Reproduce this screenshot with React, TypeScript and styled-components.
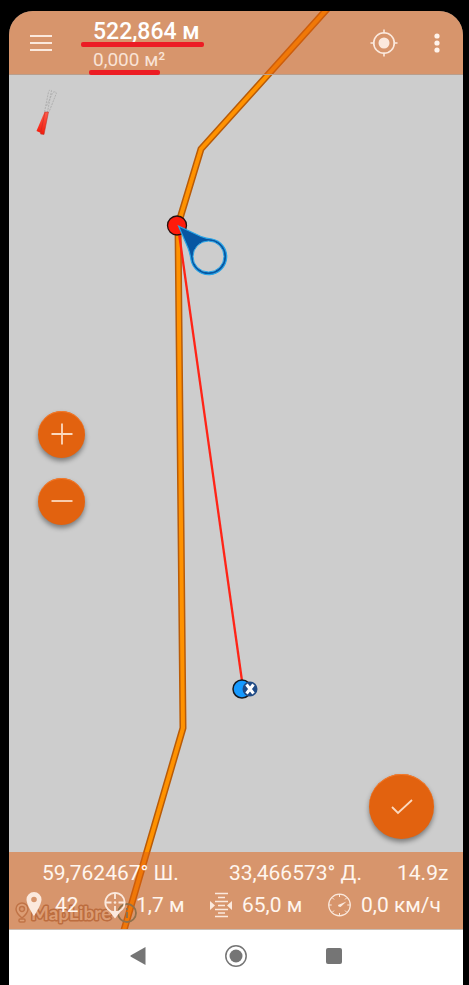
import React from 'react';
import styled, { createGlobalStyle } from 'styled-components';

const bar = 'rgba(226, 97, 16, 0.51)';
const cream = '#fbe9dd';

const GlobalStyle = createGlobalStyle`
  * { box-sizing: border-box; }
  body {
    margin: 0;
    background: #000;
    font-family: Roboto, "Noto Sans", sans-serif;
  }
  button {
    border: 0;
    padding: 0;
    background: none;
    display: flex;
    align-items: center;
    justify-content: center;
    cursor: pointer;
  }
  svg { display: block; }
`;

const Screen = styled.div`
  padding: 11px 6px 0 9px;
  min-height: 100vh;
  display: flex;
`;

const Phone = styled.main`
  position: relative;
  flex: 1;
  display: flex;
  flex-direction: column;
  overflow: hidden;
  background: #cdcdcd;
  border-radius: 24px 24px 0 0;
`;

const MapCanvas = styled.svg`
  position: absolute;
  inset: 0;
  width: 100%;
  height: 100%;
`;

const Header = styled.header`
  position: relative;
  display: flex;
  align-items: center;
  height: 64px;
  padding: 0 10px 0 18px;
  background: ${bar};
  border-bottom: 1px solid #b99e8c;
  color: ${cream};
`;

const HeaderButton = styled.button<{ $width: number }>`
  width: ${p => p.$width}px;
  height: 44px;
  color: ${cream};
`;

const HeaderActions = styled.div`
  display: flex;
  gap: 15px;
`;

const Measurements = styled.div`
  flex: 1;
  display: flex;
  flex-direction: column;
  align-items: flex-start;
  gap: 4px;
  margin-left: 38px;
  padding-top: 7px;
`;

const Measure = styled.span<{ $main?: boolean }>`
  position: relative;
  font-size: ${p => (p.$main ? 23 : 19)}px;
  line-height: 24px;
  font-weight: ${p => (p.$main ? 500 : 400)};
  color: ${p => (p.$main ? '#fff' : '#f9e3d6')};
  white-space: nowrap;

  &::after {
    content: '';
    position: absolute;
    left: ${p => (p.$main ? -12 : -4)}px;
    right: ${p => (p.$main ? -4 : 5)}px;
    bottom: -3px;
    height: 5px;
    border-radius: 2px;
    background: #ec1c24;
  }
`;

const MapArea = styled.section`
  position: relative;
  flex: 1;
  display: flex;
  flex-direction: column;
  justify-content: space-between;
  padding: 14px 29px 13px 24px;
`;

const ZoomControls = styled.div`
  display: flex;
  flex-direction: column;
  gap: 20px;
  padding-left: 5px;
  margin-top: 72px;
`;

const RoundButton = styled.button<{ $size: number }>`
  width: ${p => p.$size}px;
  height: ${p => p.$size}px;
  border-radius: 50%;
  background: #e2620f;
  color: #fbd9bf;
  box-shadow: 0 3px 5px rgba(0, 0, 0, 0.4), inset 0 1px 0 #f47a2c;
`;

const Confirm = styled(RoundButton)`
  align-self: flex-end;
`;

const Footer = styled.footer`
  position: relative;
  display: flex;
  flex-direction: column;
  gap: 7px;
  height: 78px;
  padding: 9px 0 0;
  background: ${bar};
  border-bottom: 1px solid #c9bdb4;
  color: #fff6ef;
  font-size: 21px;
  line-height: 24px;
  white-space: nowrap;
`;

const Coordinates = styled.div`
  display: grid;
  grid-template-columns: 187fr 168fr 66fr;
  padding-left: 33px;
`;

const Stats = styled.div`
  display: grid;
  grid-template-columns: 81fr 106fr 118fr 135fr;
  padding-left: 14px;
`;

const Stat = styled.div`
  display: flex;
  align-items: center;
  gap: 10px;
  height: 26px;
`;

const Attribution = styled.div`
  position: absolute;
  left: 5px;
  bottom: 60px;
  display: flex;
  align-items: center;
  gap: 2px;
`;

const NavBar = styled.nav`
  position: relative;
  display: flex;
  justify-content: center;
  gap: 54px;
  height: 55px;
  padding-bottom: 3px;
  background: #fff;
`;

const NavButton = styled.button`
  width: 44px;
  color: #757575;
`;

const track = '328,8 201,149 178,225 183,728 124,930';

const MapDrawing = () => (
  <MapCanvas viewBox="9 11 454 974" preserveAspectRatio="xMidYMid slice" aria-hidden="true">
    <g fill="none" strokeLinejoin="round">
      <polyline points={track} stroke="#b85b08" strokeWidth="7" />
      <polyline points={track} stroke="#ff9200" strokeWidth="4" />
      <path d="M178 226 243 688" stroke="#ff2417" strokeWidth="2.3" />
    </g>
    <circle cx="177" cy="225.500" r="9.500" fill="#ff1b0c" stroke="#26100e" strokeWidth="1.300" />
    <path d="M178.500 226 201 236.500Q206 238.500 212 239A18 18 0 1 1 191 260Q190 253 188 248Z" fill="#0756a2" stroke="#27a5e8" strokeWidth="1.200" />
    <circle cx="208.500" cy="256.500" r="15.500" fill="#cdcdcd" stroke="#27a5e8" strokeWidth="1" />
    <circle cx="242" cy="689" r="9" fill="#169aff" stroke="#171a20" strokeWidth="1.500" />
    <circle cx="250" cy="689" r="7.500" fill="#204b86" />
    <path d="m246.500 684.500 7 9m0-9-7 9" stroke="#fff" strokeWidth="3" />
    <defs>
      <linearGradient id="needle" x1="0" y1="0" x2="0" y2="1">
        <stop offset="0" stopColor="#ff5a4a" />
        <stop offset="1" stopColor="#f51b0b" />
      </linearGradient>
    </defs>
    <g fill="none" stroke="#b0b0b0" strokeWidth="1" strokeDasharray="2 1">
      <path d="m44.500 112 4-20q1-3 3-1.500l-4 21.500M46.500 106l6-13q2-2.500 4 0L49 112" />
    </g>
    <path d="M44.500 112h3.500l-2 10-5 11-4.500-2Z" fill="url(#needle)" />
    <path d="M45 112h3.500l-4.500 22.500-3.500-.5Z" fill="url(#needle)" stroke="#b53026" strokeWidth=".5" />
  </MapCanvas>
);

const LocationIcon = () => (
  <svg width="28" height="28" viewBox="0 0 28 28" fill="none" stroke="currentColor">
    <circle cx="14" cy="14" r="10.300" strokeWidth="1.600" />
    <circle cx="14" cy="14" r="5.500" fill="currentColor" stroke="none" />
    <path d="M14 .5v4M14 23.500v4M.5 14h4M23.500 14h4" strokeWidth="1.600" />
  </svg>
);

const PinIcon = () => (
  <svg width="22" height="26" viewBox="0 0 22 26">
    <path fill={cream} fillRule="evenodd" d="M11 0a7.500 7.500 0 0 0-7.500 7.500C3.500 13 11 24 11 24s7.500-11 7.500-16.500A7.500 7.500 0 0 0 11 0Zm0 4.700a2.800 2.800 0 1 1 0 5.600 2.800 2.800 0 0 1 0-5.600Z" />
  </svg>
);

const AccuracyIcon = () => (
  <svg width="22" height="28" viewBox="0 0 22 28" fill="none" stroke={cream}>
    <circle cx="11" cy="11.500" r="9.700" strokeWidth="1.800" />
    <path d="M11 2v6M11 15v6M1.500 11.500h6M14.500 11.500h6" strokeWidth="1.800" />
    <circle cx="11" cy="11.500" r="1.300" fill={cream} stroke="none" />
    <path d="M3.500 18q7.500 5 15 0L11 27.500Z" fill={cream} stroke="none" />
  </svg>
);

const AltitudeIcon = () => (
  <svg width="22" height="26" viewBox="0 0 22 26" stroke={cream} strokeWidth="1.300">
    <path d="M5 1.500h13M8 5.500h7M5 9.500h13M8 13.500h7M5 17.500h13M8 21h7M5 24.500h13" />
    <path d="M0 9v9l5-4.500ZM22 9v9l-5-4.500Z" fill={cream} stroke="none" />
  </svg>
);

const SpeedIcon = () => (
  <svg width="23" height="24" viewBox="0 0 23 24" fill="none" stroke={cream}>
    <circle cx="11.500" cy="12" r="10.800" strokeWidth="1.200" />
    <path d="M11.500 1v3M11.500 20v3M.7 12h3M19.300 12h3M4 4.500l2 2M17 17.500l2 2M4 19.500l2-2M17 6.500l2-2" />
    <path d="m18.500 8.500-6 5.500-2-.5-.5-1.500Z" fill={cream} stroke="none" />
  </svg>
);

const MapLibreLogo = () => (
  <svg width="101" height="24" viewBox="0 0 101 24" role="img" aria-label="MapLibre">
    <g fill="#d7dcdd" stroke="#9d8880" strokeWidth="1.500">
      <path fillRule="evenodd" d="M8 2a6 6 0 0 0-6 6c0 4 6 9 6 9s6-5 6-9a6 6 0 0 0-6-6Zm0 3.500a2.500 2.500 0 1 1 0 5 2.500 2.500 0 0 1 0-5Z" />
      <rect x="5" y="18" width="6" height="3" rx="1" />
    </g>
    <text x="17" y="19" fontFamily="Lato, sans-serif" fontWeight="700" fontSize="19" fill="#d7dcdd" stroke="#957a70" strokeWidth="3" strokeLinejoin="round" paintOrder="stroke">MapLibre</text>
  </svg>
);

export default function App() {
  return (
    <>
      <GlobalStyle />
      <Screen>
        <Phone>
          <MapDrawing />
          <Attribution>
            <MapLibreLogo />
            <button aria-label="Информация">
              <svg width="20" height="20" viewBox="0 0 20 20" fill="none" stroke="#3c8088">
                <circle cx="10" cy="10" r="9" strokeWidth="1.800" />
                <path d="M10 9v6M10 5v2" strokeWidth="2" />
              </svg>
            </button>
          </Attribution>
          <Header>
            <HeaderButton $width={28} aria-label="Меню">
              <svg width="22" height="16" viewBox="0 0 22 16" stroke="currentColor" strokeWidth="2">
                <path d="M0 1h22M0 8h22M0 15h22" />
              </svg>
            </HeaderButton>
            <Measurements>
              <Measure $main>522,864 м</Measure>
              <Measure>0,000 м²</Measure>
            </Measurements>
            <HeaderActions>
              <HeaderButton $width={44} aria-label="Моё местоположение"><LocationIcon /></HeaderButton>
              <HeaderButton $width={32} aria-label="Ещё">
                <svg width="6" height="20" viewBox="0 0 6 20" fill="#fff3eb">
                  <circle cx="3" cy="3" r="2.600" />
                  <circle cx="3" cy="10" r="2.600" />
                  <circle cx="3" cy="17" r="2.600" />
                </svg>
              </HeaderButton>
            </HeaderActions>
          </Header>
          <MapArea>
            <span />
            <ZoomControls>
              <RoundButton $size={47} aria-label="Приблизить">
                <svg width="22" height="22" viewBox="0 0 22 22" stroke="currentColor" strokeWidth="1.800"><path d="M.5 11h21M11 .5v21" /></svg>
              </RoundButton>
              <RoundButton $size={47} aria-label="Отдалить">
                <svg width="22" height="22" viewBox="0 0 22 22" stroke="currentColor" strokeWidth="1.800"><path d="M.5 11h21" /></svg>
              </RoundButton>
            </ZoomControls>
            <Confirm $size={65} aria-label="Готово">
              <svg width="22" height="18" viewBox="0 0 22 18" fill="none" stroke="currentColor" strokeWidth="1.800"><path d="m1 9 6 6L21 2" /></svg>
            </Confirm>
          </MapArea>
          <Footer>
            <Coordinates>
              <span>59,762467° Ш.</span>
              <span>33,466573° Д.</span>
              <span>14.9z</span>
            </Coordinates>
            <Stats>
              <Stat><PinIcon />42</Stat>
              <Stat><AccuracyIcon />1,7 м</Stat>
              <Stat><AltitudeIcon />65,0 м</Stat>
              <Stat><SpeedIcon />0,0 км/ч</Stat>
            </Stats>
          </Footer>
          <NavBar>
            <NavButton aria-label="Назад">
              <svg width="16" height="20" viewBox="0 0 16 20" fill="currentColor"><path d="M15.500 1v18L.5 10.500v-1Z" /></svg>
            </NavButton>
            <NavButton aria-label="Домой">
              <svg width="24" height="24" viewBox="0 0 24 24"><circle cx="12" cy="12" r="10.200" fill="none" stroke="currentColor" strokeWidth="1.500" /><circle cx="12" cy="12" r="6.500" fill="currentColor" /></svg>
            </NavButton>
            <NavButton aria-label="Недавние приложения">
              <svg width="18" height="18" viewBox="0 0 18 18"><rect x="1" y="1" width="16" height="16" rx="2" fill="currentColor" /></svg>
            </NavButton>
          </NavBar>
        </Phone>
      </Screen>
    </>
  );
}
